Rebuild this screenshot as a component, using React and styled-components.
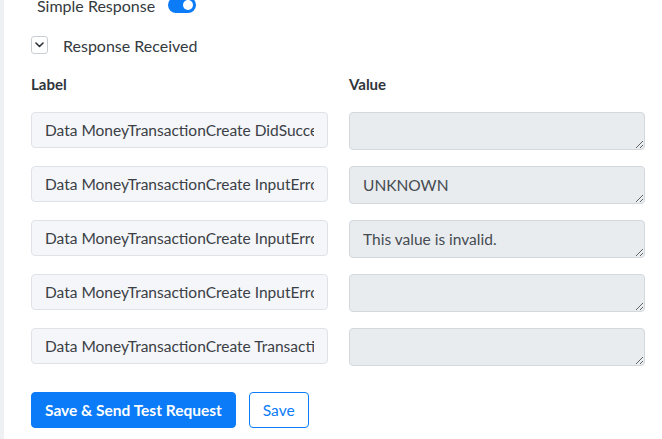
import React from "react";
import styled, { createGlobalStyle } from "styled-components";

const GlobalStyle = createGlobalStyle`
  html, body {
    margin: 0;
    background: #fff;
  }
  body {
    font-family: Lato, "Noto Sans", sans-serif;
    color: #343a40;
  }
`;

const Page = styled.div`
  min-height: 439px;
  border-left: 4px solid #eef0f3;
  box-sizing: border-box;
  overflow: hidden;
`;

const Panel = styled.div`
  margin-top: -9px;
  padding: 0 17px 0 27px;
`;

const ToggleRow = styled.div`
  display: flex;
  align-items: center;
  gap: 13px;
  height: 28px;
  padding-left: 6px;
  font-size: 16px;
`;

const Switch = styled.span`
  position: relative;
  display: inline-block;
  width: 28px;
  height: 16px;
  border-radius: 8px;
  background: ${(p) => (p.on ? "#0b7bf8" : "#ced4da")};
  &::after {
    content: "";
    position: absolute;
    top: 3px;
    left: ${(p) => (p.on ? "15px" : "3px")};
    width: 10px;
    height: 10px;
    border-radius: 50%;
    background: #fff;
  }
`;

const CollapseRow = styled.div`
  display: flex;
  align-items: center;
  gap: 15px;
  margin-top: 12px;
  height: 28px;
  font-size: 16px;
`;

const ChevronBox = styled.span`
  display: inline-flex;
  align-items: center;
  justify-content: center;
  width: 15px;
  height: 16px;
  border: 1px solid #c9ced4;
  border-radius: 3px;
  color: #2b3137;
`;

const Grid = styled.div`
  display: grid;
  grid-template-columns: 297px 296px;
  align-items: start;
  column-gap: 21px;
  row-gap: 16px;
  margin-top: 13px;
`;

const ColHead = styled.div`
  font-size: 15px;
  font-weight: 700;
  height: 24px;
  display: flex;
  align-items: center;
  color: #2f353b;
`;

const LabelInput = styled.input`
  box-sizing: border-box;
  width: 100%;
  height: 36px;
  padding: 0 13px;
  border: 1px solid #dfe3e8;
  border-radius: 4px;
  background: #f4f6f9;
  font: 15.5px Lato, "Noto Sans", sans-serif;
  color: #3b4046;
  outline: none;
`;

const ValueArea = styled.textarea`
  box-sizing: border-box;
  width: 100%;
  height: 38px;
  padding: 8px 13px 0;
  border: 1px solid #d3d8dd;
  border-radius: 4px;
  background: #e9ecef;
  font: 15.5px Lato, "Noto Sans", sans-serif;
  line-height: 20px;
  color: #454b51;
  resize: vertical;
  outline: none;
  overflow: hidden;
  display: block;
`;

const Actions = styled.div`
  display: flex;
  gap: 13px;
  margin-top: 26px;
`;

const Button = styled.button`
  height: 36px;
  padding: 0 13px;
  border-radius: 4px;
  font: 15.5px Lato, "Noto Sans", sans-serif;
  border: 1px solid #0b7bf8;
  background: ${(p) => (p.primary ? "#0b7bf8" : "#fff")};
  color: ${(p) => (p.primary ? "#fff" : "#0b7bf8")};
  font-weight: ${(p) => (p.primary ? 700 : 400)};
`;

const rows = [
  ["Data MoneyTransactionCreate DidSucceed", ""],
  ["Data MoneyTransactionCreate InputErrors Code", "UNKNOWN"],
  ["Data MoneyTransactionCreate InputErrors Message", "This value is invalid."],
  ["Data MoneyTransactionCreate InputErrors Path", ""],
  ["Data MoneyTransactionCreate TransactionId", ""],
];

export default function App() {
  return (
    <Page>
      <GlobalStyle />
      <Panel>
        <ToggleRow>
          <span>Simple Response</span>
          <Switch on />
        </ToggleRow>
        <CollapseRow>
          <ChevronBox>
            <svg width="9" height="6" viewBox="0 0 9 6">
              <path d="M1 1l3.5 3.5L8 1" fill="none" stroke="currentColor" strokeWidth="1.6" strokeLinecap="round" strokeLinejoin="round" />
            </svg>
          </ChevronBox>
          <span>Response Received</span>
        </CollapseRow>
        <Grid>
          <ColHead>Label</ColHead>
          <ColHead>Value</ColHead>
          {rows.map(([label, value]) => (
            <React.Fragment key={label}>
              <LabelInput readOnly value={label} />
              <ValueArea readOnly value={value} />
            </React.Fragment>
          ))}
        </Grid>
        <Actions>
          <Button primary>Save &amp; Send Test Request</Button>
          <Button>Save</Button>
        </Actions>
      </Panel>
    </Page>
  );
}
